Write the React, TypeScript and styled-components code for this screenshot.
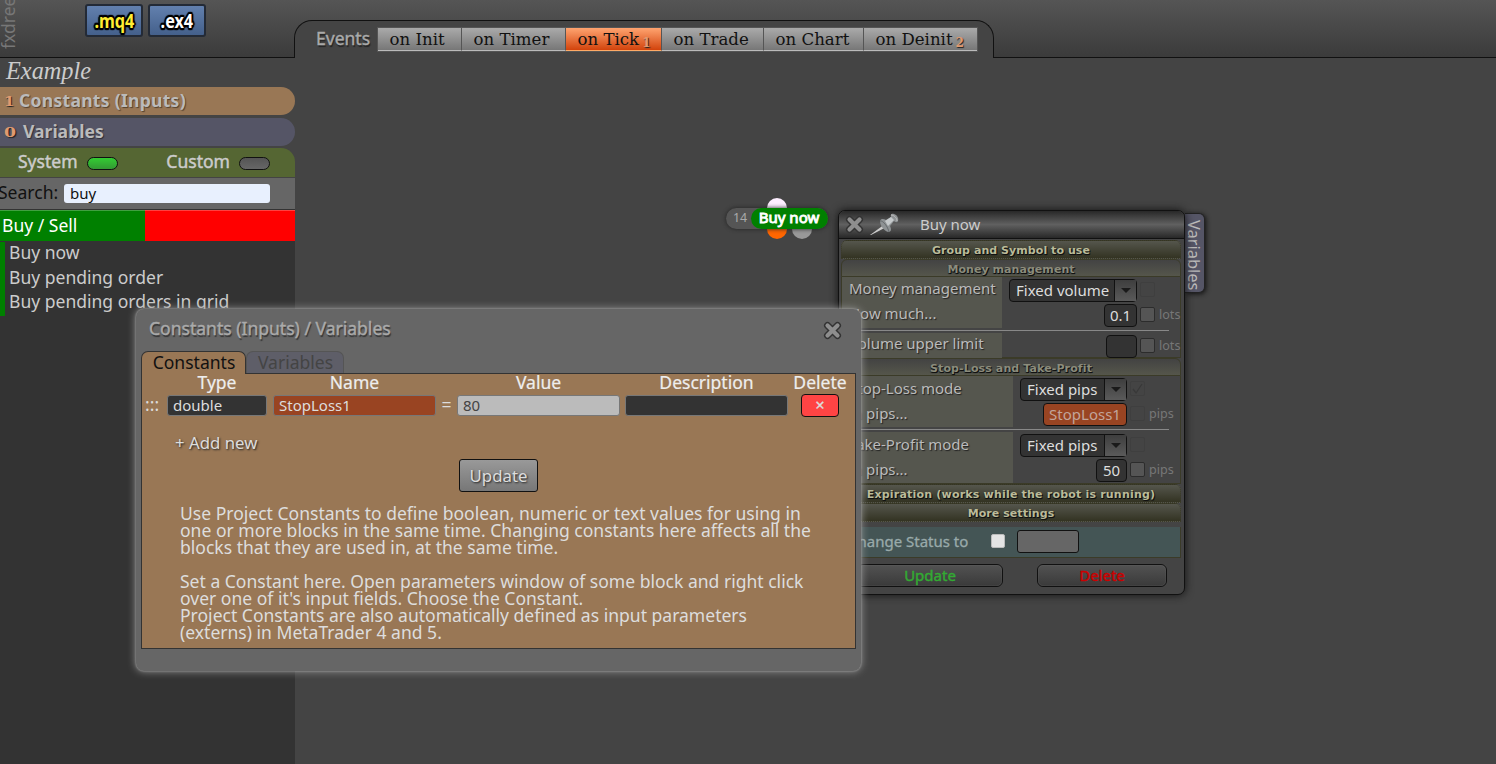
import React from "react";
import styled, { createGlobalStyle } from "styled-components";

const GlobalStyle = createGlobalStyle`
  * { box-sizing: border-box; }
  html, body { margin: 0; padding: 0; }
  body {
    width: 1496px;
    height: 764px;
    overflow: hidden;
    background: #444;
    color: #ccc;
    font-family: "Noto Sans", "Open Sans", sans-serif;
    font-size: 17.55px;
    white-space: nowrap;
  }
`;

const Page = styled.div`
  position: relative;
  width: 1496px;
  height: 764px;
  overflow: hidden;
  background: #444;
`;

/* ---------- header ---------- */

const Header = styled.header`
  display: flex;
  align-items: flex-end;
  height: 58px;
  border-bottom: 1px solid #111;
  background: linear-gradient(#555, #3b3b3b);
`;

const HeaderLeft = styled.div`
  display: flex;
  align-items: flex-start;
  width: 294px;
  height: 57px;
  overflow: hidden;
`;

const Brand = styled.div`
  display: flex;
  justify-content: flex-start;
  width: 16px;
  height: 49px;
  margin-right: 68px;
  writing-mode: vertical-rl;
  transform: rotate(180deg);
  line-height: 17px;
  color: #777;
`;

const FileButton = styled.button<{ $color: string }>`
  width: 58px;
  height: 33px;
  margin: 4px 5px 0 1px;
  padding: 0;
  border: 2px solid #232a36;
  border-radius: 3px;
  background: linear-gradient(#6280ae, #44608b);
  font: 700 19.8px/25px "Noto Sans", sans-serif;
  color: ${(p) => p.$color};
  text-shadow: 1px 1px 1px #000, -1px -1px 1px #000, 1px -1px 1px #000, -1px 1px 1px #000,
    2px 0 1px #000, -2px 0 1px #000, 0 2px 1px #000, 0 -2px 1px #000, 1px 2px 1px #000, -1px 2px 1px #000,
    1px -2px 1px #000, -1px -2px 1px #000;
  span { display: inline-block; transform: scaleX(0.82); }
  & + & { margin-left: 0; }
`;

const EventsTab = styled.div`
  display: flex;
  align-items: flex-start;
  width: 700px;
  height: 38px;
  margin-bottom: -1px;
  padding: 6px 0 0 21px;
  border: 1px solid #111;
  border-bottom: 0;
  border-radius: 18px 18px 0 0;
  background: #444;
`;

const EventsLabel = styled.span`
  width: 61px;
  line-height: 22px;
  color: #aaa;
  -webkit-text-stroke: 0.4px #aaa;
  text-shadow: 1px 2px 1px #222;
`;

const EventGroup = styled.div`
  display: flex;
  height: 25px;
  border: 1px solid #555;
`;

const EventButton = styled.button<{ $w: number; $active?: boolean }>`
  display: flex;
  align-items: flex-start;
  width: ${(p) => p.$w}px;
  padding: 0 0 0 11.5px;
  border: 0;
  border-right: 1px solid #555;
  border-bottom: 1px solid ${(p) => (p.$active ? "#fa6" : "#bbb")};
  background: ${(p) => (p.$active ? "linear-gradient(#ffa470, #d2430c)" : "linear-gradient(#aaa, #777)")};
  font: 16.6px/23px "DejaVu Serif", serif;
  color: #111;
  &:last-child { border-right: 0; }
  sub {
    margin: 4px 0 0 3px;
    font: 700 12px/22px "DejaVu Serif", serif;
    color: #e09a70;
    text-shadow: 1px 1px 1px #222;
  }
`;

/* ---------- sidebar ---------- */

const Sidebar = styled.aside`
  display: flex;
  flex-direction: column;
  width: 295px;
  height: 706px;
`;

const ProjectName = styled.div`
  height: 29px;
  padding-left: 6px;
  font: italic 24.3px/25px "Liberation Serif", serif;
  color: #ccc;
`;

const SideBar = styled.div<{ $bg: string; $gap: number; $track?: number }>`
  display: flex;
  align-items: flex-start;
  height: 28px;
  margin-bottom: ${(p) => p.$gap}px;
  padding-left: 4px;
  border-radius: 0 14px 14px 0;
  background: ${(p) => p.$bg};
  font-weight: 700;
  line-height: 26px;
  letter-spacing: ${(p) => p.$track ?? 0}px;
  color: #bbb;
  text-shadow: 1px 1px 1px rgba(0, 0, 0, 0.45);
`;

const Count = styled.span<{ $w: number; $stretch?: number }>`
  width: ${(p) => p.$w}px;
  padding-top: 3px;
  font: 700 15px/25px "DejaVu Serif", serif;
  letter-spacing: 0;
  color: #e09a70;
  text-shadow: 1px 1px 1px #222;
  i {
    display: inline-block;
    font-style: normal;
    transform: scale(${(p) => p.$stretch ?? 1}, 0.82);
    transform-origin: left center;
  }
`;

const LibraryRow = styled.div`
  display: flex;
  align-items: center;
  height: 30px;
  padding: 0 25px 0 18px;
  border-bottom: 1px solid #444;
  border-radius: 0 14px 0 0;
  background: #563;
  color: #ccc;
  -webkit-text-stroke: 0.45px #ccc;
  span { line-height: 26px; margin-top: -4px; }
`;

const Led = styled.i<{ $on?: boolean }>`
  width: 31px;
  height: 13px;
  margin: 2px auto 0 9px;
  border: 1px solid #111;
  border-radius: 7px;
  background: ${(p) => (p.$on ? "linear-gradient(#3c3, #393)" : "linear-gradient(#555, #666)")};
  &:last-child { margin-right: 0; }
`;

const SearchRow = styled.label`
  display: flex;
  align-items: center;
  height: 31px;
  background: #666;
  color: #111;
  span { width: 66px; margin: -3px 0 0 -2px; line-height: 28px; }
`;

const SearchInput = styled.div`
  width: 206px;
  height: 19px;
  padding-left: 6px;
  margin-top: 0;
  border-radius: 3px;
  background: #e8f0fe;
  font-size: 15px;
  line-height: 18px;
`;

const Category = styled.div`
  height: 33px;
  padding-left: 2px;
  border-top: 1px solid #333;
  border-bottom: 1px solid #333;
  background: linear-gradient(90deg, #008000 145px, #f00 145px);
  box-shadow: inset 0 1px 0 rgba(255, 255, 255, 0.25);
  line-height: 31px;
  color: #fff;
`;

const BlockList = styled.div`
  flex: 1;
  background: #333;
`;

const BlockItem = styled.div`
  height: 24.6px;
  padding-left: 4px;
  border-left: 5px solid #008000;
  line-height: 20px;
  color: #ccc;
`;

/* ---------- canvas block ---------- */

const Node = styled.div`
  position: absolute;
  left: 726px;
  top: 208px;
  display: flex;
  width: 102px;
  height: 21px;
  border-radius: 11px;
  background: #555;
  box-shadow: 0 0 4px #222;
`;

const Port = styled.i<{ $x: number; $y: number; $bg: string }>`
  position: absolute;
  left: ${(p) => p.$x}px;
  top: ${(p) => p.$y}px;
  width: 20px;
  height: 20px;
  border-radius: 50%;
  background: ${(p) => p.$bg};
`;

const NodeId = styled.span`
  width: 25px;
  padding-left: 7px;
  font-size: 12.4px;
  line-height: 19px;
  color: #aaa;
`;

const NodeTitle = styled.span`
  width: 77px;
  padding-right: 1px;
  border-radius: 11px;
  background: #008000;
  font-size: 15px;
  line-height: 19px;
  text-align: center;
  color: #fff;
  -webkit-text-stroke: 0.9px #fff;
`;

/* ---------- parameters window ---------- */

const ParamWindow = styled.section`
  position: absolute;
  left: 838px;
  top: 210px;
  width: 347px;
  height: 385px;
  border: 1px solid #111;
  border-radius: 7px;
  background: #444;
  box-shadow: 0 0 8px #111;
  font-size: 15px;
`;

const SideTab = styled.div`
  position: absolute;
  left: 1185px;
  top: 213px;
  width: 20px;
  height: 80px;
  border: 1px solid #222;
  border-left: 0;
  border-radius: 0 6px 6px 0;
  background: #556;
  box-shadow: 1px 1px 5px #111;
  writing-mode: vertical-rl;
  padding-top: 6px;
  font-size: 16.4px;
  line-height: 19px;
  color: #bbb;
`;

const ParamTitle = styled.div`
  display: flex;
  align-items: center;
  height: 28px;
  padding-left: 6px;
  border-bottom: 1px solid #111;
  border-radius: 6px 6px 0 0;
  background: linear-gradient(#282828, #606060 50%, #282828);
  color: #ccc;
  svg + svg { margin-left: 5px; }
  span { margin: -2px 0 0 21px; }
`;

const Sections = styled.div`
  width: 340px;
  margin: 1px 0 0 2px;
`;

const SectionHead = styled.div<{ $open?: boolean; $track?: number }>`
  height: ${(p) => (p.$open ? 18 : 19)}px;
  border: 1px ${(p) => (p.$open ? "solid" : "dotted")} #3b3b28;
  border-radius: 6px 6px 0 0;
  background: ${(p) => (p.$open ? "linear-gradient(#434343, #55564b)" : "linear-gradient(#55564d, #333322)")};
  font: 700 11px/19px "DejaVu Sans", sans-serif;
  letter-spacing: ${(p) => p.$track ?? 0.06}px;
  text-align: center;
  color: ${(p) => (p.$open ? "#8c8c7c" : "#bb9")};
  text-shadow: 0 1px 1px #111, 1px 1px 0 #111;
`;

const Group = styled.div`
  border: 1px solid #3b3b28;
  border-top: 0;
`;

const Param = styled.div<{ $label: number; $h?: number }>`
  display: grid;
  grid-template-columns: ${(p) => p.$label}px 1fr;
  height: ${(p) => p.$h ?? 25}px;
`;

const ParamLabel = styled.span<{ $line?: number }>`
  padding-left: 7px;
  background: #55564e;
  line-height: ${(p) => p.$line ?? 24}px;
  color: #bbb;
  text-shadow: 1px 1px 1px #222;
`;

const Controls = styled.div<{ $right: number }>`
  display: flex;
  justify-content: flex-end;
  align-items: flex-start;
  padding: 2px ${(p) => p.$right}px 0 0;
`;

const Rule = styled.hr`
  width: 327px;
  height: 1px;
  margin: 2px 0;
  border: 0;
  background: #888;
`;

const Select = styled.div<{ $w: number }>`
  display: flex;
  width: ${(p) => p.$w}px;
  height: 23px;
  border: 1px solid #111;
  border-radius: 4px;
  background: #333;
  line-height: 21px;
  color: #ddd;
  span { flex: 1; padding-left: 6px; }
`;

const Arrow = styled.i`
  display: flex;
  align-items: center;
  justify-content: center;
  width: 22px;
  border-left: 1px solid #111;
  background: linear-gradient(#3e3e3e, #5a5a5a);
  &::after {
    content: "";
    border: 5px solid transparent;
    border-top: 5px solid #1a1a1a;
    border-bottom: 0;
  }
`;

const ValueBox = styled.div<{ $w: number; $linked?: boolean }>`
  width: ${(p) => p.$w}px;
  height: 23px;
  border: 1px solid #111;
  border-radius: 4px;
  background: ${(p) => (p.$linked ? "#942" : "#333")};
  color: ${(p) => (p.$linked ? "#c2a59b" : "#ddd")};
  line-height: 20px;
  text-align: center;
`;

const Check = styled.i<{ $faint?: boolean }>`
  display: flex;
  width: 15px;
  height: 15px;
  margin: 3px 0 0 3px;
  border: 1px solid ${(p) => (p.$faint ? "#3f3f3f" : "#2c2c2c")};
  border-radius: 2px;
  background: ${(p) => (p.$faint ? "transparent" : "#555")};
`;

const Unit = styled.span<{ $w: number }>`
  width: ${(p) => p.$w}px;
  padding: 1px 0 0 4px;
  font-size: 12.6px;
  line-height: 20px;
  color: #777;
`;

const StatusRow = styled.div`
  display: flex;
  align-items: center;
  height: 31px;
  margin-top: 5px;
  padding-left: 7px;
  border-right: 1px solid #3b3b28;
  border-bottom: 1px solid #3b3b28;
  background: #455;
  color: #9aa;
  > span {
    width: 143px;
    margin-top: -3px;
    line-height: 28px;
    -webkit-text-stroke: 0.3px #9aa;
  }
`;

const LightCheck = styled.i`
  width: 14px;
  height: 14px;
  margin: -2px 12px 0 0;
  border: 1px solid #bbb;
  border-radius: 2px;
  background: #e4e4e4;
`;

const StatusBox = styled.div`
  width: 62px;
  height: 23px;
  margin-top: -2px;
  border: 1px solid #111;
  border-radius: 3px;
  background: #666;
`;

const ParamButtons = styled.div`
  display: flex;
  justify-content: space-between;
  margin: 6px 14px 0 16px;
`;

const ParamButton = styled.button<{ $w: number; $color: string }>`
  width: ${(p) => p.$w}px;
  height: 23px;
  padding: 0;
  border: 1px solid #111;
  border-radius: 6px;
  background: linear-gradient(#525252, #3a3a3a);
  box-shadow: inset 0 0 1px #888;
  font: 15px/21px "Noto Sans", sans-serif;
  color: ${(p) => p.$color};
  -webkit-text-stroke: 0.45px ${(p) => p.$color};
`;

/* ---------- constants dialog ---------- */

const Dialog = styled.section`
  position: absolute;
  left: 136px;
  top: 309px;
  width: 725px;
  height: 362px;
  padding: 0 5px;
  border-radius: 8px;
  background: #666;
  box-shadow: 0 0 2px #aaa, 0 0 8px #999;
`;

const DialogTitle = styled.div`
  display: flex;
  align-items: center;
  justify-content: space-between;
  height: 42px;
  padding: 0 14px 0 8px;
  color: #aaa;
  span {
    margin-top: -5px;
    -webkit-text-stroke: 0.4px #aaa;
    text-shadow: 1px 2px 1px #333;
  }
`;

const Tabs = styled.div`
  display: flex;
  height: 23px;
`;

const Tab = styled.div<{ $w: number; $active?: boolean }>`
  width: ${(p) => p.$w}px;
  height: ${(p) => (p.$active ? 23 : 22)}px;
  padding-left: 1px;
  border: 1px solid ${(p) => (p.$active ? "#333" : "#555")};
  border-bottom: 0;
  border-radius: 7px 7px 0 0;
  background: ${(p) => (p.$active ? "#975" : "#5e5e68")};
  line-height: 21px;
  text-align: center;
  color: ${(p) => (p.$active ? "#111" : "#444")};
  z-index: 1;
`;

const TabBody = styled.div`
  height: 276px;
  margin-top: -1px;
  border: 1px solid #333;
  background: #975;
  color: #ddd;
`;

const ConstantsGrid = styled.div`
  display: grid;
  grid-template-columns: 25px 100px 6px 163px 21px 163px 5px 163px 13px 38px;
  grid-template-rows: 19px 24px;
  align-items: center;
  line-height: 19px;
`;

const Heading = styled.span<{ $col: number }>`
  grid-column: ${(p) => p.$col};
  grid-row: 1;
  justify-self: center;
  margin: -2px -20px 0;
  color: #eee;
  -webkit-text-stroke: 0.2px #eee;
`;

const Handle = styled.span`
  grid-column: 1;
  grid-row: 2;
  margin-top: -2px;
  padding-left: 3px;
  color: #ddd;
`;

const Field = styled.div<{ $col: number; $bg: string; $color?: string }>`
  grid-column: ${(p) => p.$col};
  grid-row: 2;
  height: 21px;
  padding-left: 5px;
  border: 1px solid #777;
  border-radius: 3px;
  background: ${(p) => p.$bg};
  font-size: 15px;
  line-height: 19px;
  color: ${(p) => p.$color ?? "#ddd"};
`;

const Equals = styled.span`
  grid-column: 5;
  grid-row: 2;
  justify-self: center;
  margin-top: -2px;
`;

const RemoveButton = styled.button`
  grid-column: 10;
  grid-row: 2;
  height: 23px;
  padding: 0;
  border: 1px solid #111;
  border-radius: 4px;
  background: #f44;
  font: 16.5px/20px "Noto Sans", sans-serif;
  color: #ddd;
  -webkit-text-stroke: 0.3px #ddd;
`;

const AddNew = styled.div`
  margin: 16px 0 0 33px;
  height: 20px;
  font-size: 16.8px;
  line-height: 20px;
  text-shadow: 1px 1px 2px #222;
`;

const UpdateButton = styled.button`
  display: block;
  width: 79px;
  height: 33px;
  margin: 6px auto 0;
  padding: 0;
  border: 1px solid #111;
  border-radius: 3px;
  background: linear-gradient(#999, #777);
  font: 16.8px/31px "Noto Sans", sans-serif;
  color: #ddd;
  text-shadow: 1px 1px 2px #222;
`;

const Help = styled.p`
  margin: 13px 0 0 38px;
  font-size: 17.54px;
  line-height: 17px;
`;

const CloseIcon = () => (
  <svg width="19" height="19" viewBox="0 0 19 19" fill="none" strokeLinecap="round">
    <path d="M4.5 4.5l10 10M14.5 4.5l-10 10" stroke="#333" strokeWidth="7" />
    <path d="M4.5 4.5l10 10M14.5 4.5l-10 10" stroke="#8e8e8e" strokeWidth="4.2" />
  </svg>
);

const PinIcon = () => (
  <svg width="30" height="23" viewBox="0 0 30 23">
    <path d="M1 22L14 12.5l2 2.2L2 22z" fill="#ccc" />
    <path d="M11 8c1-3 4-2 6-1l5-3c-1-3 1-4 3-3 3 1 5 4 4 7-1 2-3 1-4 0l-4 5c1 2 2 5-1 6-4 0-9-6-9-11z" fill="#8e9294" />
    <path d="M16 8l6-4 3 3-6 6z" fill="#c5c9cb" />
    <path d="M11 8c3-1 8 6 9 11" stroke="#666b6e" fill="none" />
    <path d="M22 2c3 0 6 3 6 6" stroke="#bbb" fill="none" />
  </svg>
);

const Tick = () => (
  <svg width="13" height="13" viewBox="0 0 13 13" fill="none" stroke="#393939" strokeWidth="1.3">
    <path d="M2 7l3 4 6-9" />
  </svg>
);

const Choice = ({ text, width, checked }: { text: string; width: number; checked?: boolean }) => (
  <>
    <Select $w={width}><span>{text}</span><Arrow /></Select>
    <Check $faint>{checked && <Tick />}</Check>
  </>
);

const events = [
  { name: "on Init", w: 84 },
  { name: "on Timer", w: 104 },
  { name: "on Tick", w: 96, count: 1, active: true },
  { name: "on Trade", w: 102 },
  { name: "on Chart", w: 100 },
  { name: "on Deinit", w: 113, count: 2 },
];

export default function App() {
  return (
    <Page>
      <GlobalStyle />
      <Header>
        <HeaderLeft>
          <Brand>fxdreema</Brand>
          <FileButton $color="#fe3"><span>.mq4</span></FileButton>
          <FileButton $color="#fff"><span>.ex4</span></FileButton>
        </HeaderLeft>
        <EventsTab>
          <EventsLabel>Events</EventsLabel>
          <EventGroup>
            {events.map((e) => (
              <EventButton key={e.name} $w={e.w} $active={e.active}>
                {e.name}
                {e.count && <sub>{e.count}</sub>}
              </EventButton>
            ))}
          </EventGroup>
        </EventsTab>
      </Header>

      <Sidebar>
        <ProjectName>Example</ProjectName>
        <SideBar $bg="#975" $gap={3} $track={0.28}><Count $w={15}><i>1</i></Count>Constants (Inputs)</SideBar>
        <SideBar $bg="#556" $gap={2}><Count $w={19} $stretch={1.15}><i>0</i></Count>Variables</SideBar>
        <LibraryRow><span>System</span><Led $on /><span>Custom</span><Led /></LibraryRow>
        <SearchRow><span>Search:</span><SearchInput>buy</SearchInput></SearchRow>
        <Category>Buy / Sell</Category>
        <BlockList>
          <BlockItem>Buy now</BlockItem>
          <BlockItem>Buy pending order</BlockItem>
          <BlockItem>Buy pending orders in grid</BlockItem>
        </BlockList>
      </Sidebar>

      <Port $x={767} $y={198} $bg="#fdeeff" />
      <Port $x={767} $y={219} $bg="#f60" />
      <Port $x={792} $y={219} $bg="#999" />
      <Node><NodeId>14</NodeId><NodeTitle>Buy now</NodeTitle></Node>

      <SideTab>Variables</SideTab>
      <ParamWindow>
        <ParamTitle><CloseIcon /><PinIcon /><span>Buy now</span></ParamTitle>
        <Sections>
          <SectionHead>Group and Symbol to use</SectionHead>
          <SectionHead $open>Money management</SectionHead>
          <Group>
            <Param $label={160}>
              <ParamLabel $line={22}>Money management</ParamLabel>
              <Controls $right={25}><Choice text="Fixed volume" width={128} /></Controls>
            </Param>
            <Param $label={160} $h={26}>
              <ParamLabel $line={22}>How much...</ParamLabel>
              <Controls $right={0}><ValueBox $w={33}>0.1</ValueBox><Check /><Unit $w={25}>lots</Unit></Controls>
            </Param>
            <Rule />
            <Param $label={160} $h={24}>
              <ParamLabel $line={20}>Volume upper limit</ParamLabel>
              <Controls $right={0}><ValueBox $w={31} /><Check /><Unit $w={25}>lots</Unit></Controls>
            </Param>
          </Group>
          <SectionHead $open $track={0.12}>Stop-Loss and Take-Profit</SectionHead>
          <Group>
            <Param $label={171}>
              <ParamLabel>Stop-Loss mode</ParamLabel>
              <Controls $right={35}><Choice text="Fixed pips" width={107} checked /></Controls>
            </Param>
            <Param $label={171} $h={26}>
              <ParamLabel>in pips...</ParamLabel>
              <Controls $right={0}><ValueBox $w={84} $linked>StopLoss1</ValueBox><Check $faint /><Unit $w={35}>pips</Unit></Controls>
            </Param>
            <Rule />
            <Param $label={171}>
              <ParamLabel>Take-Profit mode</ParamLabel>
              <Controls $right={35}><Choice text="Fixed pips" width={107} /></Controls>
            </Param>
            <Param $label={171} $h={26}>
              <ParamLabel>in pips...</ParamLabel>
              <Controls $right={0}><ValueBox $w={31}>50</ValueBox><Check /><Unit $w={35}>pips</Unit></Controls>
            </Param>
          </Group>
          <SectionHead $track={0.2}>Expiration (works while the robot is running)</SectionHead>
          <SectionHead>More settings</SectionHead>
          <StatusRow><span>Change Status to</span><LightCheck /><StatusBox /></StatusRow>
          <ParamButtons>
            <ParamButton $w={146} $color="#3a3">Update</ParamButton>
            <ParamButton $w={130} $color="#c00">Delete</ParamButton>
          </ParamButtons>
        </Sections>
      </ParamWindow>

      <Dialog>
        <DialogTitle><span>Constants (Inputs) / Variables</span><CloseIcon /></DialogTitle>
        <Tabs>
          <Tab $w={105} $active>Constants</Tab>
          <Tab $w={98}>Variables</Tab>
        </Tabs>
        <TabBody>
          <ConstantsGrid>
            <Heading $col={2}>Type</Heading>
            <Heading $col={4}>Name</Heading>
            <Heading $col={6}>Value</Heading>
            <Heading $col={8}>Description</Heading>
            <Heading $col={10}>Delete</Heading>
            <Handle>:::</Handle>
            <Field $col={2} $bg="#333">double</Field>
            <Field $col={4} $bg="#942">StopLoss1</Field>
            <Equals>=</Equals>
            <Field $col={6} $bg="#bbb" $color="#444">80</Field>
            <Field $col={8} $bg="#333" />
            <RemoveButton>×</RemoveButton>
          </ConstantsGrid>
          <AddNew>+ Add new</AddNew>
          <UpdateButton>Update</UpdateButton>
          <Help>
            Use Project Constants to define boolean, numeric or text values for using in<br />
            one or more blocks in the same time. Changing constants here affects all the<br />
            blocks that they are used in, at the same time.<br />
            <br />
            Set a Constant here. Open parameters window of some block and right click<br />
            over one of it's input fields. Choose the Constant.<br />
            Project Constants are also automatically defined as input parameters<br />
            (externs) in MetaTrader 4 and 5.
          </Help>
        </TabBody>
      </Dialog>
    </Page>
  );
}
